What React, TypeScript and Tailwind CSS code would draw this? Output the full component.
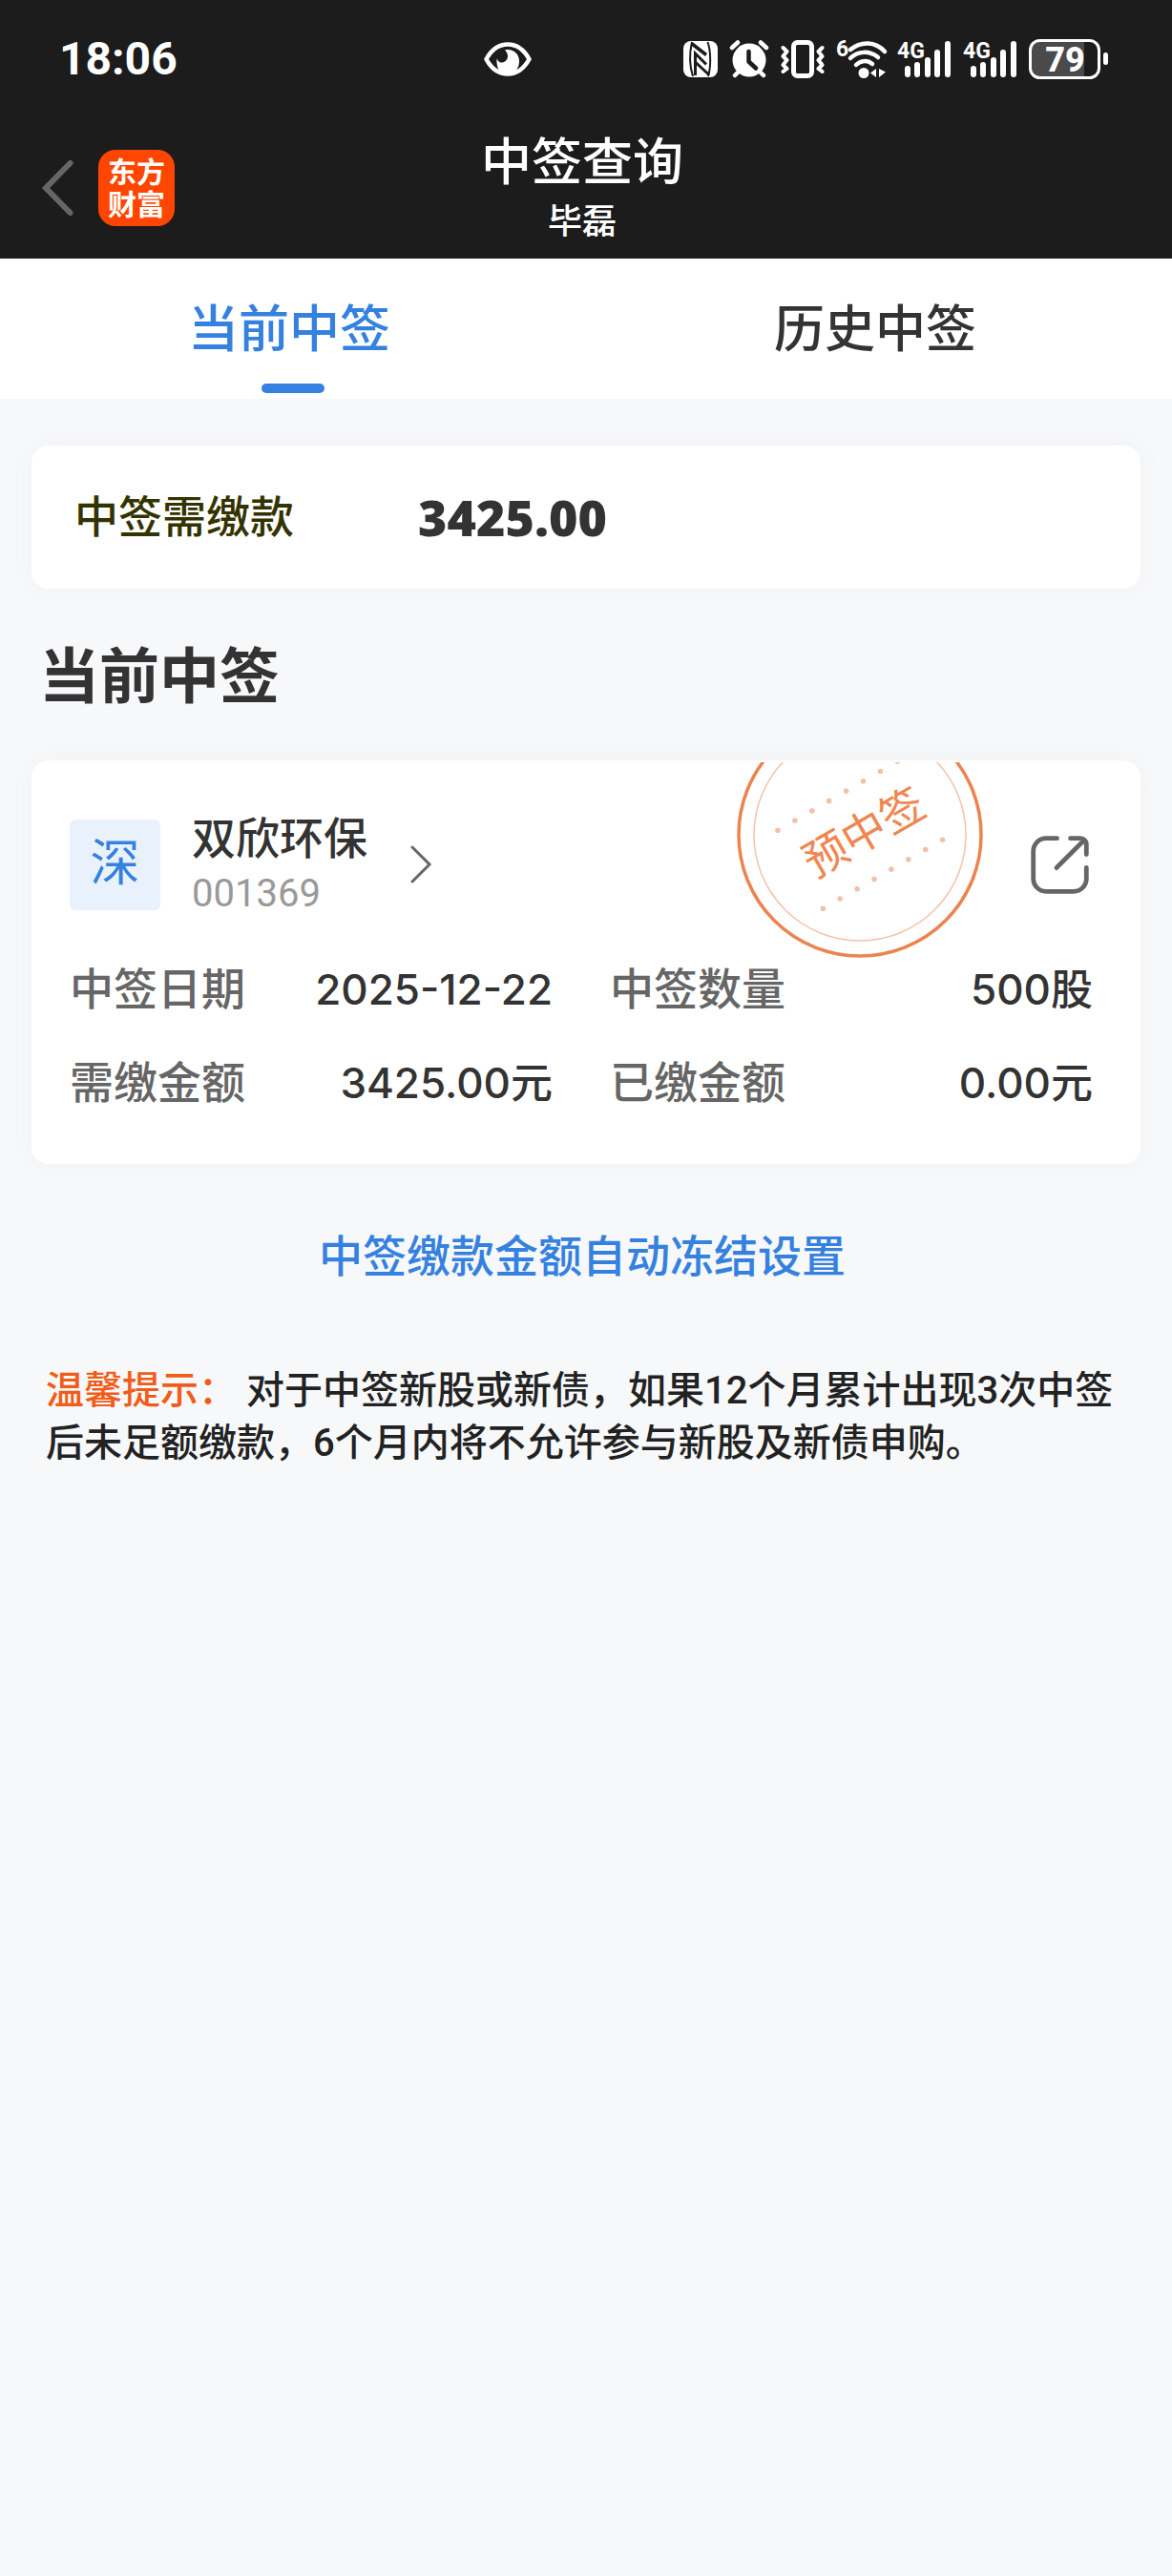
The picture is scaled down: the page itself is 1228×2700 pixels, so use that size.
import React, { useState } from 'react';

type Tab = 'current' | 'history';

const tabs: { id: Tab; label: string }[] = [
  { id: 'current', label: '当前中签' },
  { id: 'history', label: '历史中签' },
];

const details = [
  { label: '中签日期', value: '2025-12-22' },
  { label: '中签数量', value: '500股' },
  { label: '需缴金额', value: '3425.00元' },
  { label: '已缴金额', value: '0.00元' },
];

const dots = [0, 1, 2, 3, 4, 5, 6, 7];

const EyeIcon = () => (
  <svg width="50" height="36" viewBox="0 0 50 36" aria-hidden="true">
    <path d="M2.500 18C8 8 16 2.500 25 2.500S42 8 47.500 18C42 28 34 33.500 25 33.500S8 28 2.500 18Z" fill="none" stroke="#fff" strokeWidth="4.500" strokeLinejoin="round" />
    <path d="M22 8.500c8-2 15 3.500 15 11.500 0 6-3 11-7 13.500H19c-3.500-3-6-8-5.500-16 2 4.500 6 5 8.500 3 4-3 4-8 0-12Z" fill="#fff" />
  </svg>
);

const NfcIcon = () => (
  <svg width="36" height="38" viewBox="0 0 36 38" aria-hidden="true">
    <rect width="36" height="38" rx="8" fill="#fff" />
    <path d="M9 1C6.500 12 6.500 26 10 37" fill="none" stroke="#1c1c1c" strokeWidth="2" />
    <path d="M25.500 1c3.500 10 3.500 26 .500 36" fill="none" stroke="#1c1c1c" strokeWidth="2" />
    <path d="M8.500 2.500 24 14.500" fill="none" stroke="#1c1c1c" strokeWidth="3.500" />
    <path d="M12.500 36V13L24 24.500" fill="none" stroke="#1c1c1c" strokeWidth="3" />
    <path d="M13 22.500 27 35.500" fill="none" stroke="#1c1c1c" strokeWidth="3" />
  </svg>
);

const AlarmIcon = () => (
  <svg width="42" height="40" viewBox="0 0 42 40" aria-hidden="true">
    <circle cx="21" cy="21" r="17.500" fill="#fff" />
    <path d="M3 8 9 2.500M39 8l-6-5.500M10 33l-4 4M32 33l4 4" stroke="#fff" strokeWidth="4.500" strokeLinecap="round" />
    <path d="M20.500 12v10.500l7.500 7" fill="none" stroke="#1c1c1c" strokeWidth="4.500" strokeLinecap="round" strokeLinejoin="round" />
  </svg>
);

const VibrateIcon = () => (
  <svg width="46" height="40" viewBox="0 0 46 40" fill="none" stroke="#fff" aria-hidden="true">
    <rect x="13.500" y="2.500" width="19" height="35" rx="4" strokeWidth="5" />
    <path d="m2.500 8 4 4-4 5 4 4-4 5 4 4-4 3M43.500 8l-4 4 4 5-4 4 4 5-4 4 4 3" strokeWidth="4" strokeLinecap="round" strokeLinejoin="round" />
  </svg>
);

const WifiIcon = () => (
  <svg className="overflow-visible" width="52" height="42" viewBox="0 0 52 42" aria-hidden="true">
    <text x="0" y="18" fill="#fff" fontSize="23" fontWeight="700">6</text>
    <path d="M15 11c11-9 26-9 36 2M15 20c8-8 20-8 29-1M21 27c5-5 12-5 17-1" fill="none" stroke="#fff" strokeWidth="4.500" strokeLinecap="round" />
    <circle cx="29" cy="35.500" r="5.500" fill="#fff" />
    <path d="M42 31v9l-6-4.500ZM45 31v9l7-5.500Z" fill="#fff" />
  </svg>
);

const SignalIcon = () => (
  <svg className="overflow-visible" width="57" height="42" viewBox="0 0 57 42" aria-hidden="true">
    <text x="0" y="20" fill="#fff" fontSize="23" fontWeight="700">4G</text>
    <path d="M11 31v6M21 27v10M32 22v15M42 14v23M53 5v32" stroke="#fff" strokeWidth="6" strokeLinecap="round" />
  </svg>
);

const BatteryIcon = () => (
  <svg className="overflow-visible" width="84" height="42" viewBox="0 0 84 42" aria-hidden="true">
    <path d="M12 2h46v38H12C6 40 2 36 2 30V12C2 6 6 2 12 2Z" fill="#4a4a4a" />
    <rect x="1.500" y="1.500" width="72" height="39" rx="10" fill="none" stroke="#fff" strokeWidth="3" />
    <rect x="78" y="14" width="5" height="13" rx="2.500" fill="#fff" />
    <text x="38" y="34" fill="#fff" fontSize="36" fontWeight="800" textAnchor="middle">79</text>
  </svg>
);

const Stamp = () => (
  <svg className="absolute top-[2px] right-[164px]" width="260" height="206" viewBox="0 0 260 206" aria-label="预中签">
    <circle cx="130" cy="76" r="127" fill="none" stroke="#ec8450" strokeWidth="3.500" />
    <circle cx="130" cy="76" r="111" fill="none" stroke="#f4c3aa" strokeWidth="1.500" />
    {dots.map((i) => (
      <g key={i} fill="#f3c0a8">
        <circle cx={44 + i * 17.9} cy={71.3 - i * 10.3} r="2.800" />
        <circle cx={91.3 + i * 17.9} cy={153.3 - i * 10.3} r="2.800" />
      </g>
    ))}
    <text transform="translate(134 73) rotate(-30)" y="17" fill="#f08650" fontSize="46" textAnchor="middle">预中签</text>
  </svg>
);

const ShareIcon = () => (
  <svg width="61" height="61" viewBox="0 0 61 61" fill="none" stroke="#666" strokeWidth="4.800" strokeLinecap="round" strokeLinejoin="round" aria-hidden="true">
    <path d="M27.500 2.700H16A13.300 13.300 0 0 0 2.700 16V45A13.300 13.300 0 0 0 16 58.300H45A13.300 13.300 0 0 0 58.300 45V33.500" />
    <path d="M41.500 2.700H52a6.300 6.300 0 0 1 6.300 6.300V19.500M27 33.500 56 4.500" />
  </svg>
);

const App = () => {
  const [activeTab, setActiveTab] = useState<Tab>('current');

  return (
    <div className="min-h-screen bg-[#f7f8fa] font-['Roboto','Noto_Sans_CJK_SC',sans-serif] text-[#333]">

      <header className="bg-[#1c1c1c] text-white">
        {/* Status bar */}
        <div className="flex h-[124px] items-center justify-between pr-[66px] pl-[62px]">
          <div className="flex w-[45%] items-center justify-between">
            <span className="text-[48px] leading-[56px] font-bold">18:06</span>
            <EyeIcon />
          </div>
          <div className="flex items-center gap-3">
            <NfcIcon />
            <AlarmIcon />
            <VibrateIcon />
            <WifiIcon />
            <SignalIcon />
            <SignalIcon />
            <BatteryIcon />
          </div>
        </div>

        {/* Title bar */}
        <div className="grid h-[147px] grid-cols-3 items-center">
          <div className="flex items-center gap-[26px] pb-[2px] pl-[43px]">
            <button aria-label="返回">
              <svg width="34" height="60" viewBox="0 0 34 60" fill="none" stroke="#666" strokeWidth="6" strokeLinecap="round">
                <path d="M30.500 4 5 30l25.500 26" />
              </svg>
            </button>
            <div className="flex h-20 w-20 flex-col items-center justify-center rounded-[18px] bg-[#ff4600] pb-1 font-['Noto_Sans_CJK_SC',sans-serif] text-[30px] leading-[34px] font-bold">
              <span>东方</span>
              <span>财富</span>
            </div>
          </div>
          <div className="pt-[2px] pr-2 text-center">
            <h1 className="text-[53px] leading-[68px] font-medium">中签查询</h1>
            <p className="text-[36px] leading-[56px] font-medium">毕磊</p>
          </div>
        </div>
      </header>

      <nav className="grid grid-cols-2 bg-white">
        {tabs.map((tab) => (
          <button
            key={tab.id}
            onClick={() => setActiveTab(tab.id)}
            className={`flex h-[147px] flex-col items-center pt-[37px] text-[53px] leading-[76px] font-medium ${activeTab === tab.id ? 'text-[#3581e0]' : 'text-[#333]'}`}
          >
            <span className="pr-2">{tab.label}</span>
            {activeTab === tab.id && <span className="mt-[18px] h-[10px] w-[66px] rounded-full bg-[#3581e0]" />}
          </button>
        ))}
      </nav>

      <main className="px-[33px] pt-[49px]">
        <section className="flex h-[150px] items-center gap-[130px] rounded-[18px] bg-white px-[45px] shadow-[0_0_30px_rgba(0,0,0,0.03)]">
          <span className="text-[46px] leading-[60px] font-medium text-[#333300]">中签需缴款</span>
          <span className="font-['Open_Sans',sans-serif] text-[52px] leading-[60px] font-extrabold">3425.00</span>
        </section>

        <h2 className="px-2 pt-[52px] pb-[46px] text-[63px] leading-[82px] font-bold">当前中签</h2>

        <section className="relative rounded-[18px] bg-white px-[40px] pt-[51px] pb-[36px] shadow-[0_0_30px_rgba(0,0,0,0.03)]">
          <Stamp />
          <div className="flex items-center">
            <a href="#stock" className="flex items-center">
              <span className="flex h-[95px] w-[95px] items-center justify-center rounded-md bg-[#e9f1fc] text-[52px] text-[#3581e0]">深</span>
              <span className="ml-[33px] flex flex-col">
                <span className="text-[46px] leading-[62px] font-medium">双欣环保</span>
                <span className="text-[40px] leading-[54px] text-[#999]">001369</span>
              </span>
              <svg className="ml-[44px]" width="24" height="40" viewBox="0 0 24 40" fill="none" stroke="#666" strokeWidth="3" strokeLinecap="round" aria-hidden="true">
                <path d="m3 2 18 18L3 38" />
              </svg>
            </a>
            <button className="mr-[14px] ml-auto" aria-label="分享">
              <ShareIcon />
            </button>
          </div>
          <dl className="mt-[24px] grid grid-cols-2 gap-x-[60px] pr-[10px] text-[46px] leading-[98px] font-medium">
            {details.map((item) => (
              <div key={item.label} className="flex justify-between">
                <dt className="text-[#666]">{item.label}</dt>
                <dd className="font-['Inter','Noto_Sans_CJK_SC',sans-serif] text-[44px]">{item.value}</dd>
              </div>
            ))}
          </dl>
        </section>

        <div className="pt-[66px] pr-2 text-center text-[46px] leading-[62px] font-medium">
          <a href="#freeze" className="text-[#3581e0]">中签缴款金额自动冻结设置</a>
        </div>

        <p className="px-[15px] pt-[82px] text-[40px] leading-[55px] font-medium text-[#222]">
          <span className="text-[#f25c19]">温馨提示：</span> 对于中签新股或新债，如果12个月累计出现3次中签后未足额缴款，6个月内将不允许参与新股及新债申购。
        </p>
      </main>
    </div>
  );
};

export default App;
